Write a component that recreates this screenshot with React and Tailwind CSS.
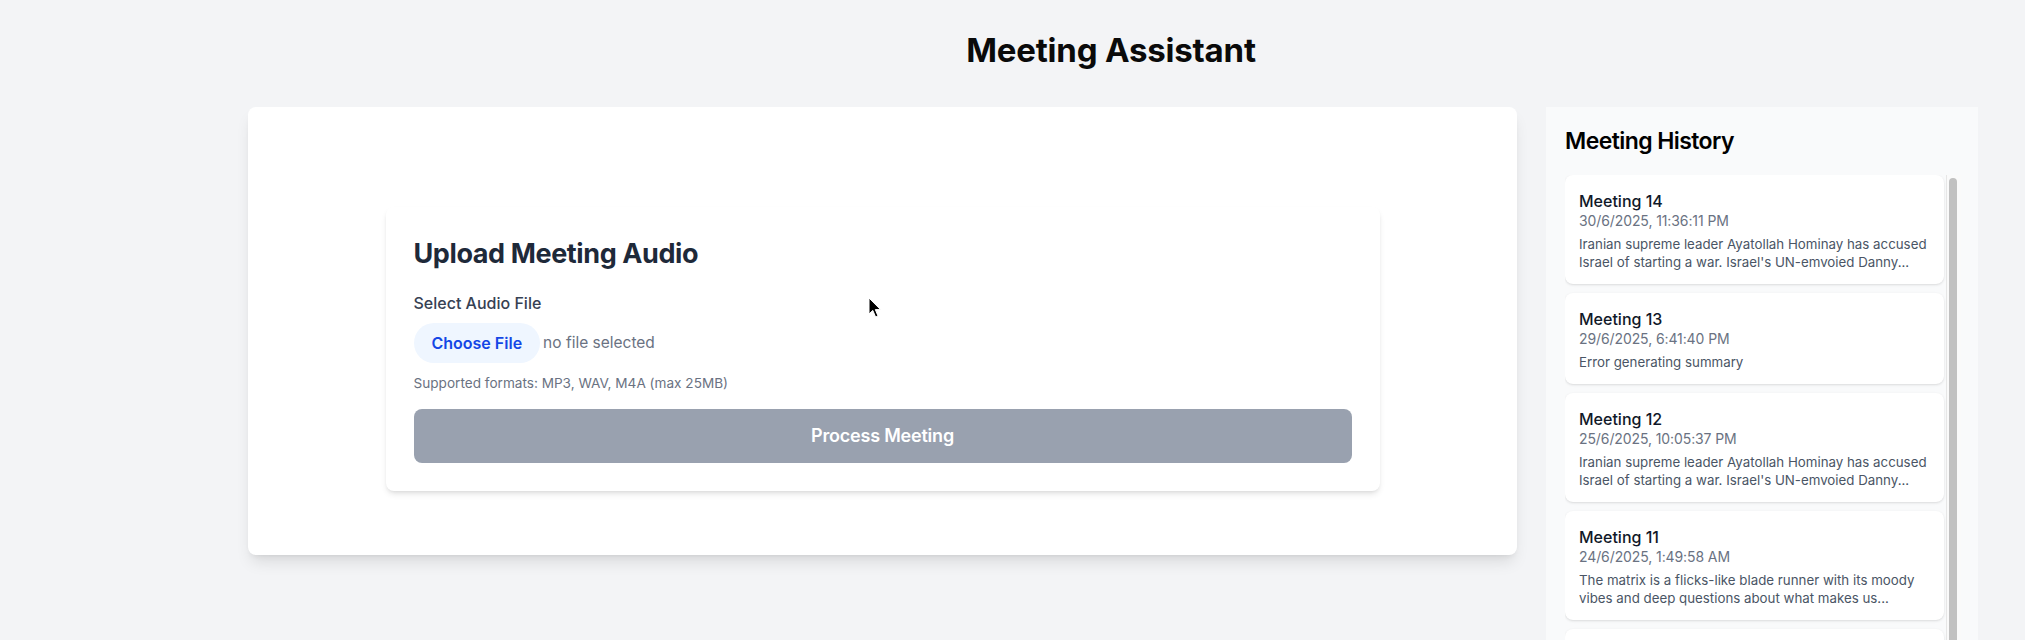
import React from "react";

const meetings = [
  {
    title: "Meeting 14",
    date: "30/6/2025, 11:36:11 PM",
    lines: [
      "Iranian supreme leader Ayatollah Hominay has accused",
      "Israel of starting a war. Israel's UN-emvoied Danny...",
    ],
  },
  {
    title: "Meeting 13",
    date: "29/6/2025, 6:41:40 PM",
    lines: ["Error generating summary"],
  },
  {
    title: "Meeting 12",
    date: "25/6/2025, 10:05:37 PM",
    lines: [
      "Iranian supreme leader Ayatollah Hominay has accused",
      "Israel of starting a war. Israel's UN-emvoied Danny...",
    ],
  },
  {
    title: "Meeting 11",
    date: "24/6/2025, 1:49:58 AM",
    lines: [
      "The matrix is a flicks-like blade runner with its moody",
      "vibes and deep questions about what makes us...",
    ],
  },
  {
    title: "Meeting 10",
    date: "23/6/2025, 9:12:04 PM",
    lines: [
      "Quarterly planning discussion covering roadmap",
      "priorities, hiring and the next release...",
    ],
  },
];

function MeetingCard({ m }) {
  return (
    <div className="bg-white rounded-lg shadow-sm pt-4 pb-[13px] px-[14px] shrink-0">
      <div className="text-base leading-5 font-medium text-gray-900">{m.title}</div>
      <div className="text-sm leading-5 text-gray-500 tracking-[-0.1px]">{m.date}</div>
      <div className="mt-1 text-[13.3px] leading-[18px] text-gray-600">
        {m.lines.map((l, i) => (
          <div key={i} className="whitespace-nowrap overflow-hidden">
            {l}
          </div>
        ))}
      </div>
    </div>
  );
}

export default function App() {
  return (
    <div className="relative h-[640px] overflow-hidden bg-[#f3f4f6] font-['Inter',sans-serif]">
      <header className="pt-[30px] pl-[197px] flex justify-center">
        <h1 className="text-[33px] leading-[40px] font-bold text-[#0a0a0a] tracking-[-0.2px]">
          Meeting Assistant
        </h1>
      </header>

      <div className="mt-[37px] flex items-start pl-[248px] pr-[47px] gap-[29px]">
        <main className="flex-1 h-[448px] bg-white rounded-lg shadow-lg pt-[100px]">
          <section className="w-[994px] mx-auto bg-white rounded-lg shadow-md px-7 pt-[29px] pb-7">
            <h2 className="text-[27px] leading-9 font-bold text-gray-800 mb-5 tracking-[-0.4px]">
              Upload Meeting Audio
            </h2>
            <label className="block text-base leading-6 font-medium text-gray-700 mb-2 -mt-px">
              Select Audio File
            </label>
            <div className="flex items-center">
              <span className="h-10 px-[18px] rounded-full bg-blue-50 text-blue-700 font-semibold text-base flex items-center">
                Choose File
              </span>
              <span className="ml-[3px] text-[15.5px] text-gray-500">no file selected</span>
            </div>
            <p className="mt-[10px] text-[13.6px] leading-5 text-gray-500">
              Supported formats: MP3, WAV, M4A (max 25MB)
            </p>
            <button className="mt-4 w-full h-[54px] rounded-lg bg-gray-400 text-white text-lg font-semibold tracking-[-0.2px]">
              Process Meeting
            </button>
          </section>
        </main>

        <aside className="w-[432px] h-[540px] bg-gray-50 pt-[18px] pl-[19px] pr-[17px] flex flex-col">
          <h2 className="text-[23px] leading-8 font-semibold tracking-tight text-black mb-[18px]">
            Meeting History
          </h2>
          <div className="flex flex-1 min-h-0">
            <div className="flex-1 pr-[2px] flex flex-col gap-[9px] overflow-hidden">
              {meetings.map((m) => (
                <MeetingCard key={m.title} m={m} />
              ))}
            </div>
            <div className="w-[15px] border-l border-[#e6e6e6] bg-[#fafafa] pl-[2px] pt-[3px]">
              <div className="w-2 h-full rounded-full bg-[#c1c1c1]" />
            </div>
          </div>
        </aside>
      </div>

      <svg
        className="absolute left-[868px] top-[297px]"
        width="14"
        height="22"
        viewBox="0 0 14 22"
      >
        <path
          d="M1 1 L1 17 L4.8 13.4 L7.6 20 L10 19 L7.3 12.6 L12.5 12.6 Z"
          fill="#000"
          stroke="#fff"
          strokeWidth="1"
          strokeLinejoin="round"
        />
      </svg>
    </div>
  );
}
